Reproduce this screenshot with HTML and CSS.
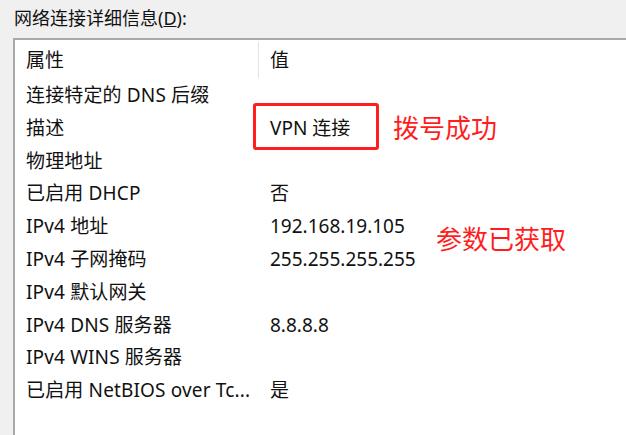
FILE: index.html
```html
<!DOCTYPE html>
<html lang="zh-CN">
<head>
<meta charset="utf-8">
<link rel="stylesheet" href="styles.css">
</head>
<body>
<div class="caption">网络连接详细信息(<u>D</u>):</div>
<div class="listbox">
  <div class="header">
    <div class="hcell">属性</div>
    <div class="hcell val">值</div>
  </div>
  <div class="row"><div class="prop">连接特定的 DNS 后缀</div><div class="val"></div></div>
  <div class="row"><div class="prop">描述</div><div class="val">VPN 连接</div></div>
  <div class="row"><div class="prop">物理地址</div><div class="val"></div></div>
  <div class="row"><div class="prop">已启用 DHCP</div><div class="val">否</div></div>
  <div class="row"><div class="prop">IPv4 地址</div><div class="val">192.168.19.105</div></div>
  <div class="row"><div class="prop">IPv4 子网掩码</div><div class="val">255.255.255.255</div></div>
  <div class="row"><div class="prop">IPv4 默认网关</div><div class="val"></div></div>
  <div class="row"><div class="prop">IPv4 DNS 服务器</div><div class="val">8.8.8.8</div></div>
  <div class="row"><div class="prop">IPv4 WINS 服务器</div><div class="val"></div></div>
  <div class="row"><div class="prop">已启用 NetBIOS over Tc...</div><div class="val">是</div></div>

  <div class="mark-box"></div>
  <div class="note note-1">拨号成功</div>
  <div class="note note-2">参数已获取</div>
</div>
</body>
</html>
```

FILE: styles.css
```css
html, body {
  margin: 0;
  padding: 0;
  background: #f0f0f0;
  overflow: hidden;
}
body {
  width: 626px;
  height: 435px;
  font-family: "Noto Sans", "Noto Sans CJK SC", sans-serif;
  color: #111;
}
.caption {
  font-size: 18px;
  line-height: 20px;
  padding: 8px 0 0 14px;
  height: 30px;
  box-sizing: border-box;
}
.listbox {
  position: relative;
  margin: 8px 0 0 13px;
  background: #fff;
  border-left: 2px solid #a9a9a9;
  border-top: 2px solid #a9a9a9;
  height: 395px;
  font-size: 19px;
}
.header {
  display: grid;
  grid-template-columns: 243px 1fr;
  height: 39px;
  align-items: center;
}
.hcell {
  padding-left: 11px;
  height: 38px;
  line-height: 38px;
}
.hcell.val {
  border-left: 1px solid #e3e3e3;
  padding-left: 11px;
  height: 36px;
  line-height: 36px;
}
.row {
  display: grid;
  grid-template-columns: 244px 1fr;
  height: 32.8px;
  line-height: 33.6px;
  white-space: nowrap;
}
.prop {
  padding-left: 11px;
  letter-spacing: 0.15px;
}
.val {
  padding-left: 11px;
}
.mark-box {
  position: absolute;
  left: 238px;
  top: 63px;
  width: 126px;
  height: 47px;
  box-sizing: border-box;
  border: 3px solid #ff1e1e;
  border-radius: 3px;
}
.note {
  position: absolute;
  color: #ff1e1e;
  font-family: "Noto Sans CJK SC", sans-serif;
  font-size: 26px;
  line-height: 30px;
  white-space: nowrap;
}
.note-1 {
  left: 378px;
  top: 72px;
}
.note-2 {
  left: 421px;
  top: 183px;
}
```
